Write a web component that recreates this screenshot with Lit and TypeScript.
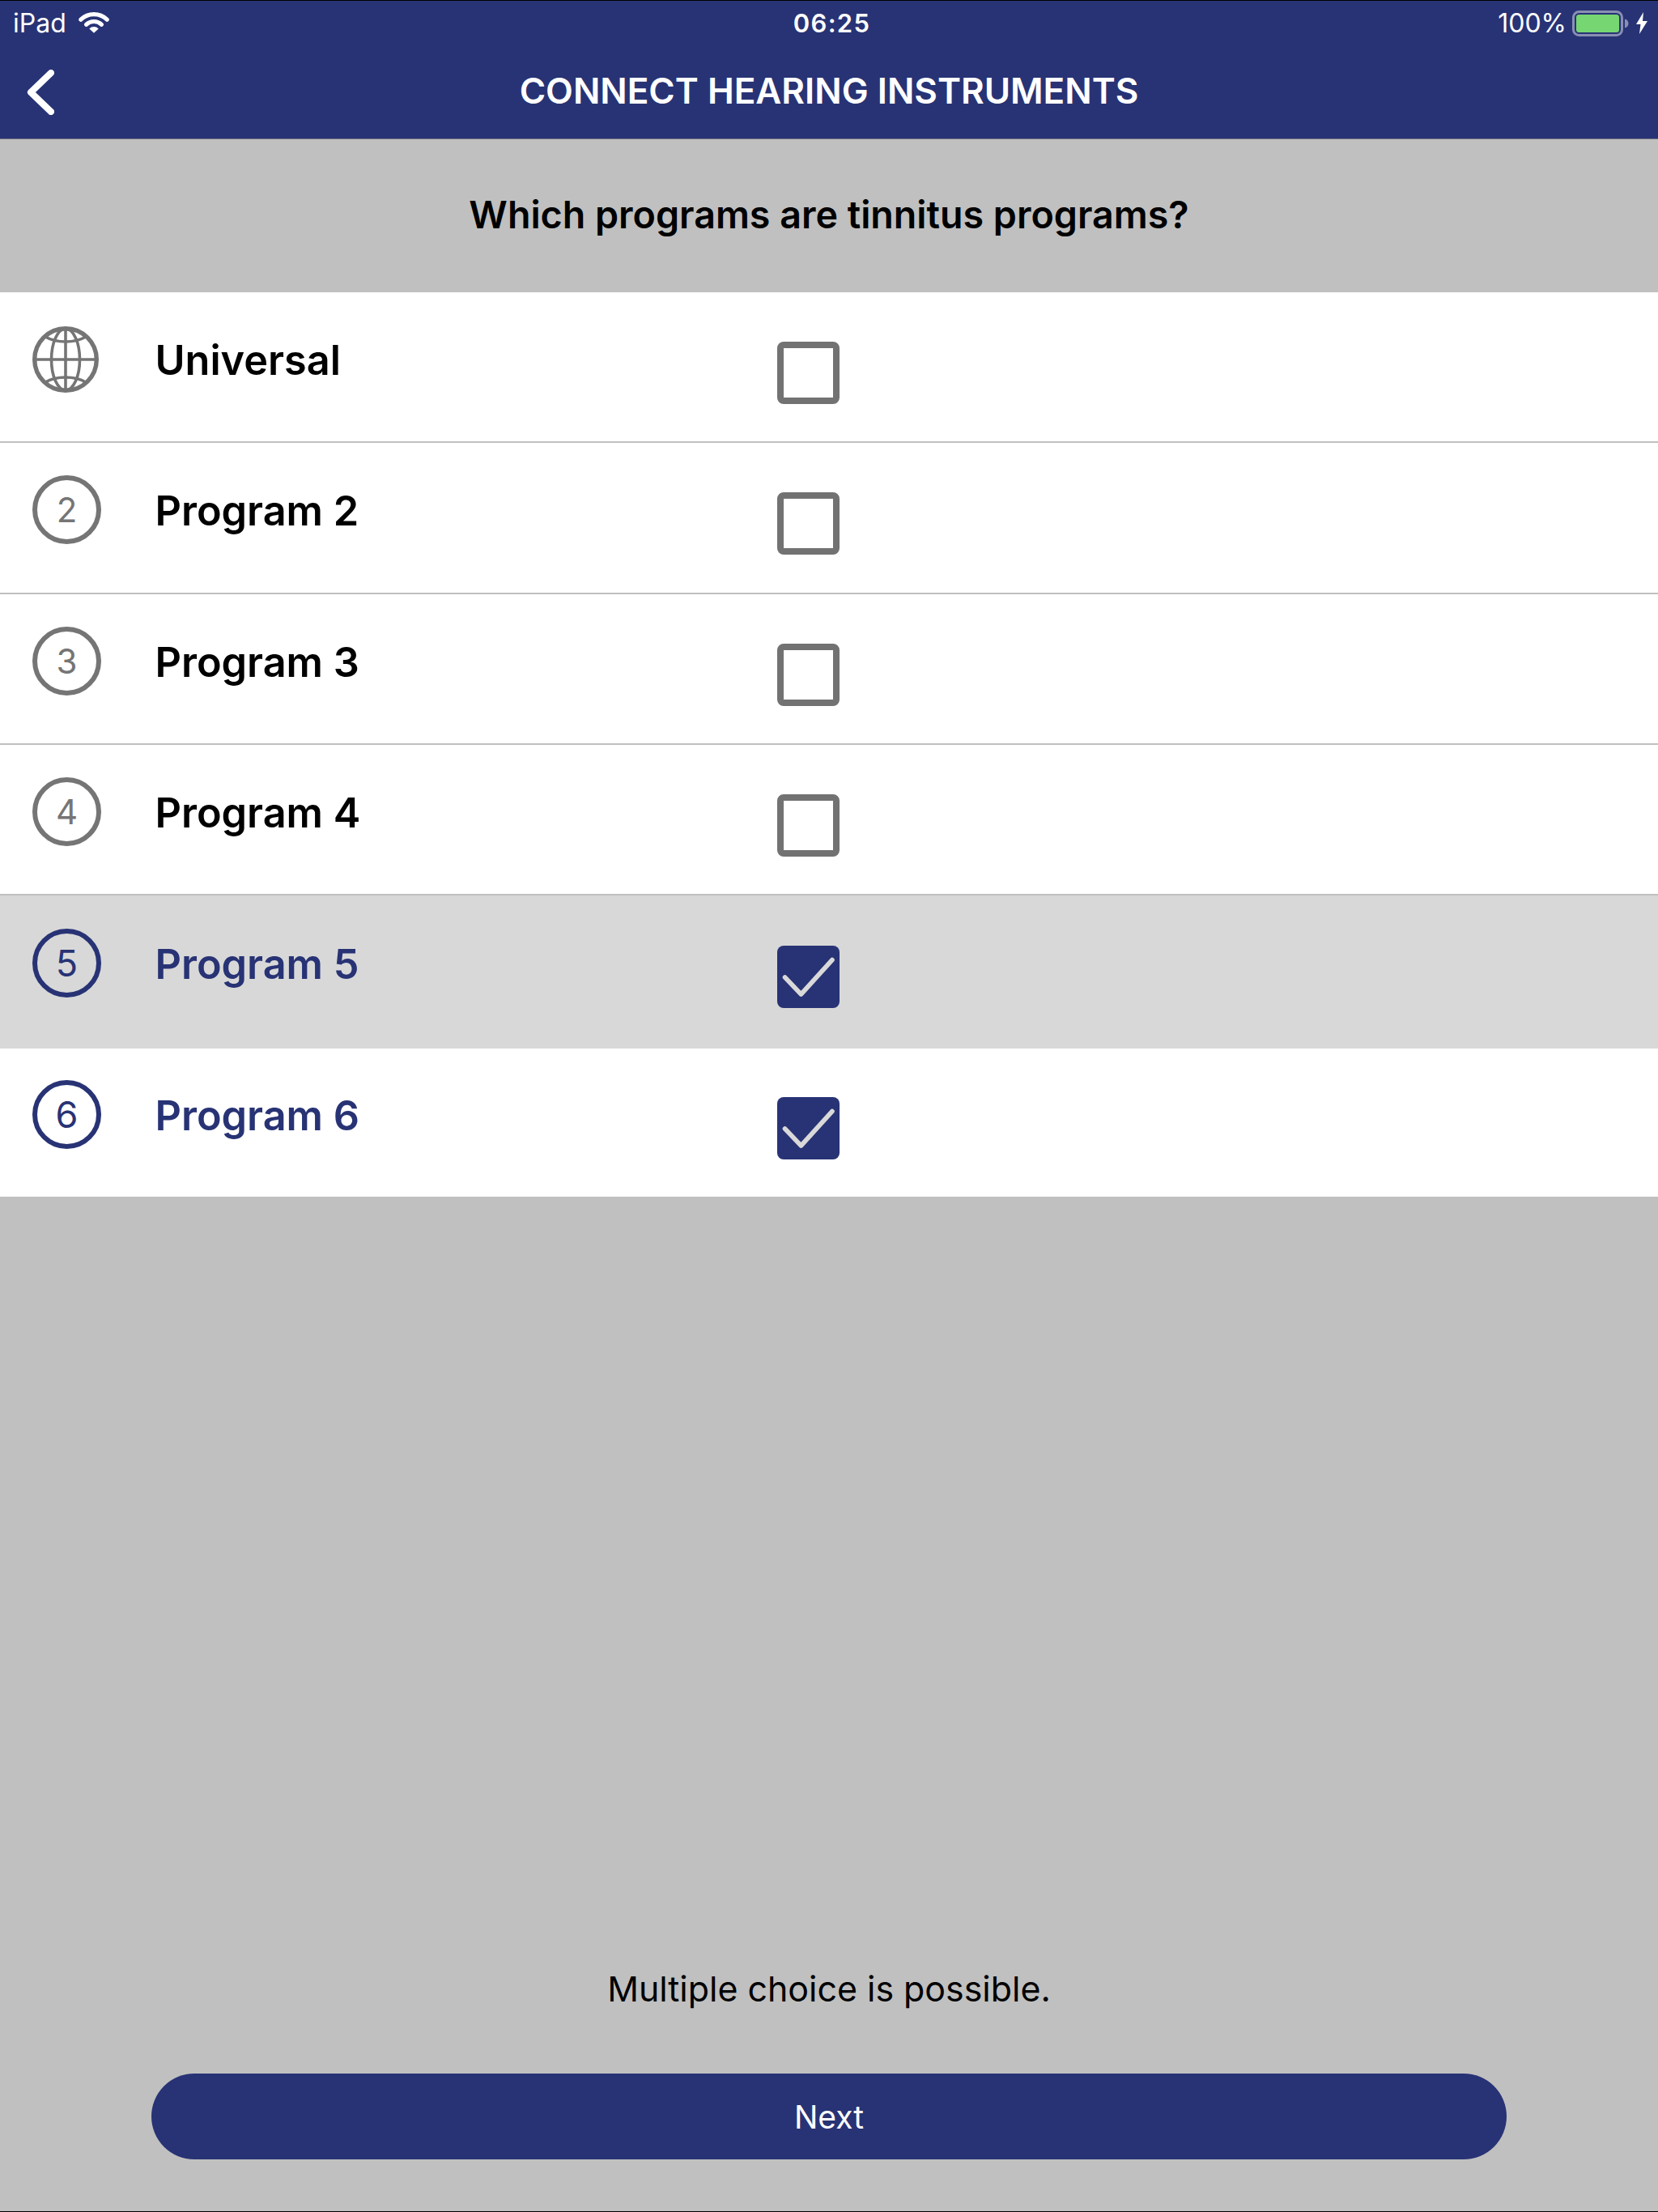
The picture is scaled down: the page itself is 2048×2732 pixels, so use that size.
import { LitElement, html, css, svg } from "lit";
import { customElement } from "lit/decorators.js";
import { classMap } from "lit/directives/class-map.js";

const programs = [
	{ id: "1", label: "Universal", on: false },
	{ id: "2", label: "Program 2", on: false },
	{ id: "3", label: "Program 3", on: false },
	{ id: "4", label: "Program 4", on: false },
	{ id: "5", label: "Program 5", on: true, shaded: true },
	{ id: "6", label: "Program 6", on: true, last: true },
];

const wifi = svg`<svg class="wifi" viewBox="0 0 40 28" width="38" height="27">
	<path d="M3 10.500a24.500 24.500 0 0 1 34 0" fill="none" stroke="#fff" stroke-width="5.400" stroke-linecap="round"/>
	<path d="M10 17a14.500 14.500 0 0 1 20 0" fill="none" stroke="#fff" stroke-width="5.400" stroke-linecap="round"/>
	<path d="M14 22.400a8.500 8.500 0 0 1 12 0L20 28z" fill="#fff"/>
</svg>`;

const battery = svg`<svg viewBox="0 0 70 32" width="70" height="32">
	<rect x="1.500" y="1.500" width="60" height="29" rx="7" fill="none" stroke="#fff" stroke-opacity=".45" stroke-width="3"/>
	<rect x="5" y="5" width="53" height="22" rx="3.500" fill="#76d672"/>
	<path d="M65 10.500c3 .8 4.500 3 4.500 5.500s-1.500 4.700-4.500 5.500z" fill="#fff" fill-opacity=".45"/>
</svg>`;

const bolt = svg`<svg viewBox="0 0 14 27" width="14" height="27">
	<path d="M9 0 0 15h5.500L4 27l10-16H8z" fill="#fff"/>
</svg>`;

const chevron = svg`<svg viewBox="0 0 34 56" width="34" height="56">
	<path d="M30 4 5 28l25 24" fill="none" stroke="#fff" stroke-width="8" stroke-linecap="round" stroke-linejoin="round"/>
</svg>`;

const globe = svg`<svg class="globe" viewBox="0 0 82 82" width="82" height="82" fill="none" stroke="#757575">
	<circle cx="41" cy="41" r="38.300" stroke-width="5.400"/>
	<ellipse cx="41" cy="41" rx="17.500" ry="38" stroke-width="3.600"/>
	<path d="M41 3v76M3 41h76" stroke-width="3.600"/>
	<path d="M16 13c14 8 36 8 50 0M16 69c14-8 36-8 50 0" stroke-width="3.600"/>
</svg>`;

const tick = svg`<svg viewBox="0 0 77 77" width="77" height="77">
	<path d="M9.500 39 29.500 60 68 17.500" fill="none" stroke="#d9d9d9" stroke-width="5.600" stroke-linecap="round" stroke-linejoin="round"/>
</svg>`;

@customElement("app-root")
export class AppRoot extends LitElement {
	static styles = css`
		:host {
			display: flex;
			flex-direction: column;
			height: 2732px;
			background: #c0c0c0;
			border-top: 1px solid #000;
			border-bottom: 1px solid #000;
			box-sizing: border-box;
			font-family: Inter, "Liberation Sans", sans-serif;
			color: #000;
		}

		.top {
			background: #283375;
			color: #fff;
			border-bottom: 1px solid #6c6c78;
		}

		.status {
			display: grid;
			grid-template-columns: 1fr auto 1fr;
			align-items: center;
			height: 55px;
			padding: 0 13px 0 16px;
			font-size: 32px;
		}

		.status .left,
		.status .right {
			display: flex;
			align-items: center;
		}

		.status .left {
			gap: 15px;
		}

		.wifi {
			margin-top: -3px;
		}

		.status .right {
			justify-content: flex-end;
			gap: 9px;
		}

		.pct {
			margin-right: -2px;
		}

		.time {
			font-weight: 600;
			font-size: 31px;
			letter-spacing: 1.300px;
			padding-left: 4px;
		}

		.bar {
			display: grid;
			grid-template-columns: 1fr auto 1fr;
			align-items: center;
			height: 115px;
		}

		.back {
			display: flex;
			padding: 0 0 0 33px;
		}

		.title {
			font-size: 44px;
			font-weight: 600;
			padding-bottom: 3px;
		}

		.question {
			display: flex;
			align-items: center;
			justify-content: center;
			height: 189px;
			font-size: 46.600px;
			font-weight: 600;
			padding-bottom: 4px;
			box-sizing: border-box;
		}

		.row {
			display: grid;
			grid-template-columns: 151.500px 768.500px 77px;
			box-sizing: border-box;
			height: 186.250px;
			padding: 40px 0 0 40px;
			background: #fff;
			border-bottom: 2px solid #c0c0c0;
		}

		.row.shaded {
			height: 189px;
			padding-top: 41px;
			background: #d8d8d8;
			border-bottom: none;
		}

		.row.last {
			height: 183px;
			padding-top: 39px;
			border-bottom: none;
		}

		.badge {
			display: flex;
			align-items: center;
			justify-content: center;
			box-sizing: border-box;
			width: 85px;
			height: 85px;
			border: 6px solid #757575;
			border-radius: 50%;
			color: #757575;
			font-size: 42px;
		}

		.globe {
			margin-top: 2px;
		}

		.label {
			font-size: 50.400px;
			font-weight: 600;
			line-height: 1;
			padding-top: 19px;
		}

		.box {
			box-sizing: border-box;
			width: 77px;
			height: 77px;
			margin-top: 21px;
			border: 8px solid #727272;
			border-radius: 8px;
		}

		.row.on .badge {
			border-color: #283375;
			color: #283375;
			font-size: 45px;
		}

		.row.on .label {
			color: #283375;
		}

		.row.on .box {
			border: none;
			background: #283375;
		}

		.foot {
			flex: 1;
			display: flex;
			flex-direction: column;
			justify-content: flex-end;
			align-items: center;
			padding-bottom: 64px;
		}

		.note {
			font-size: 42.900px;
			line-height: 56px;
			margin-bottom: 77px;
		}

		.next {
			display: flex;
			align-items: center;
			justify-content: center;
			width: 1674px;
			height: 106px;
			border-radius: 53px;
			background: #283375;
			color: #fff;
			font-size: 39px;
		}
	`;

	render() {
		return html`
			<div class="top">
				<div class="status">
					<div class="left"><span>iPad</span>${wifi}</div>
					<div class="time">06:25</div>
					<div class="right"><span class="pct">100%</span>${battery}${bolt}</div>
				</div>
				<div class="bar">
					<div class="back">${chevron}</div>
					<div class="title">CONNECT HEARING INSTRUMENTS</div>
				</div>
			</div>
			<div class="question">Which programs are tinnitus programs?</div>
			${programs.map(
				(p) => html`
					<div class=${classMap({ row: true, on: p.on, shaded: !!p.shaded, last: !!p.last })}>
						${p.id === "1" ? globe : html`<div class="badge">${p.id}</div>`}
						<div class="label">${p.label}</div>
						<div class="box">${p.on ? tick : ""}</div>
					</div>
				`
			)}
			<div class="foot">
				<div class="note">Multiple choice is possible.</div>
				<div class="next">Next</div>
			</div>
		`;
	}
}
